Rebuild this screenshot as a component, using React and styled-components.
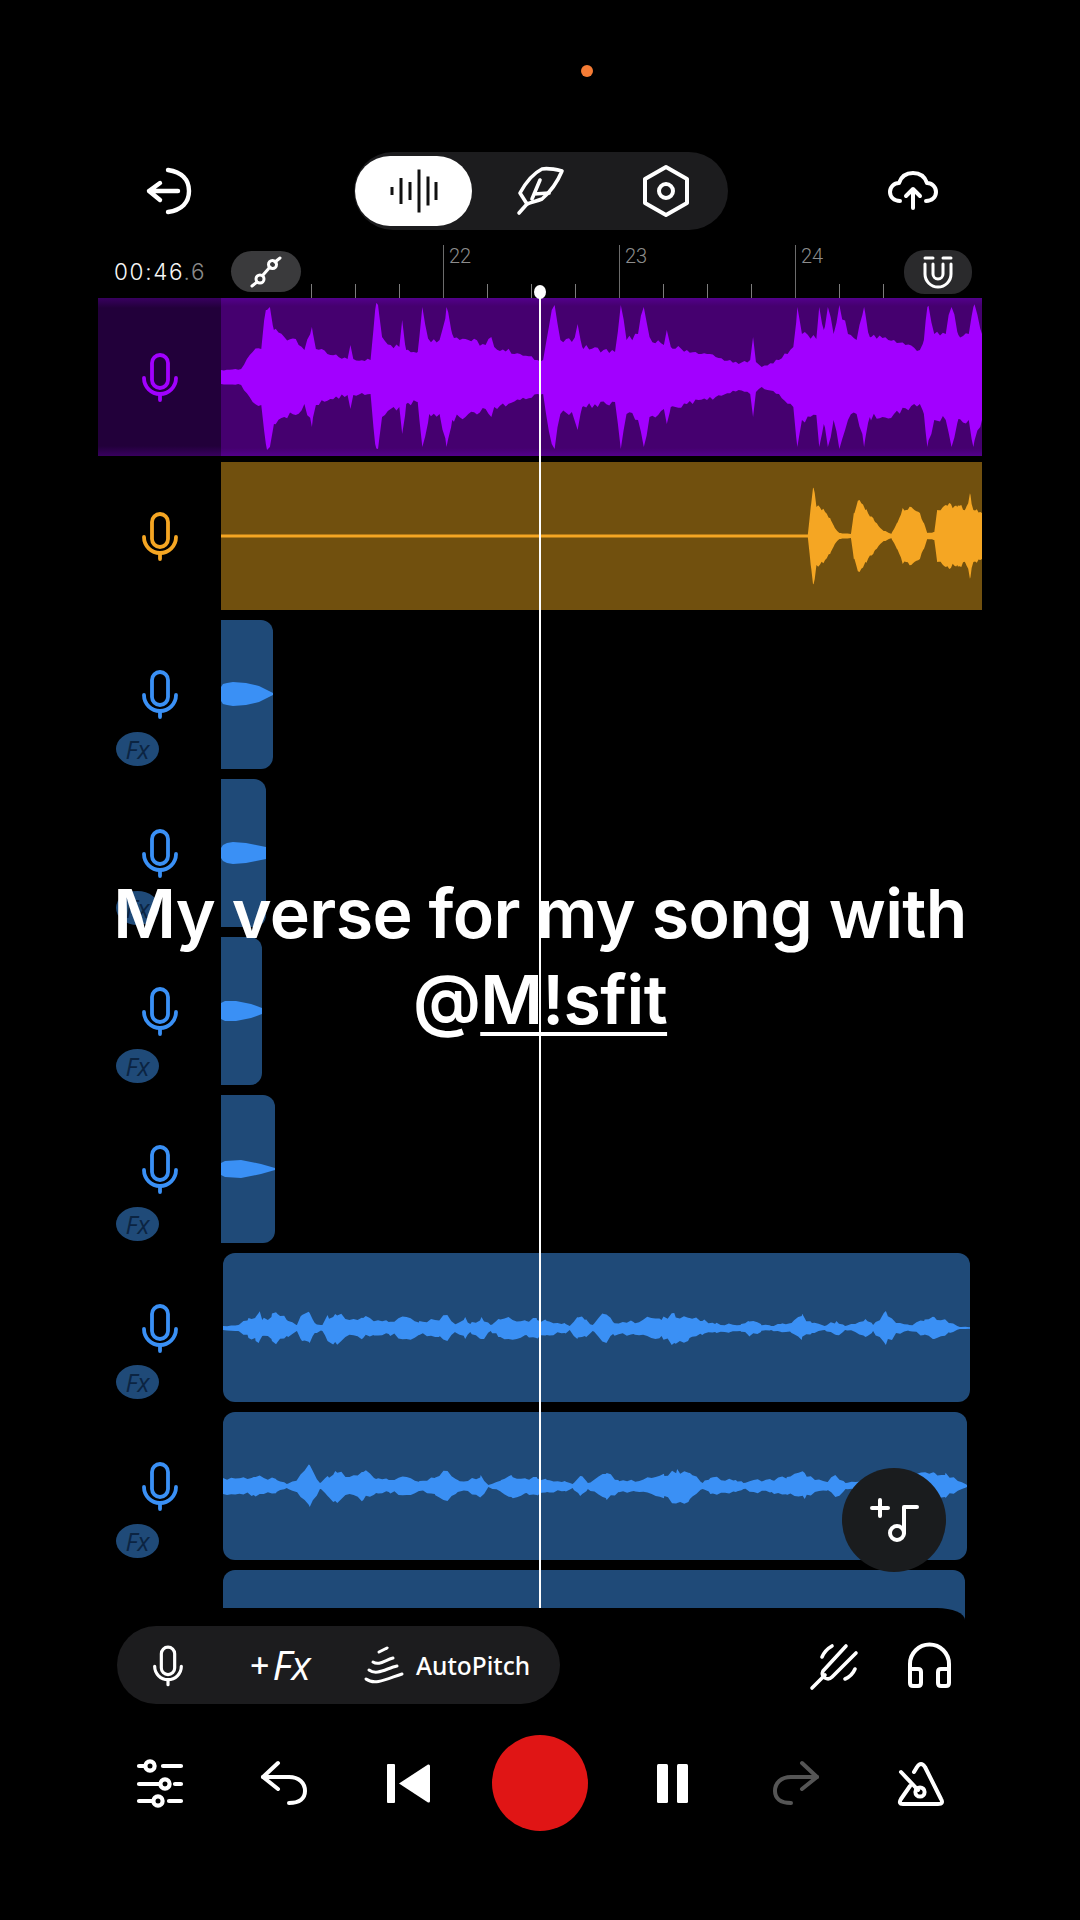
import React from "react";
import styled, { createGlobalStyle } from "styled-components";

const GlobalStyle = createGlobalStyle`
  html, body {
    margin: 0;
    background: #000;
  }
`;

const PURPLE = "#a200ff";
const AMBER = "#f5a623";
const BLUE = "#3a90f5";

// waveform envelopes as [x, amplitude] pairs, x is in free units and gets stretched to the clip
const vocalWave = [[230,7],[265,8],[285,25],[300,28],[308,67],[315,70],[322,47],[340,40],[360,38],[375,27],[388,50],[395,28],[420,22],[450,18],[455,32],[460,18],[490,17],[498,67],[503,72],[510,40],[525,32],[540,30],[545,57],[552,27],[572,25],[580,70],[592,37],[610,37],[622,70],[632,43],[660,37],[690,32],[700,40],[705,30],[750,23],[780,17],[790,17],[805,67],[810,72],[820,37],[840,35],[850,53],[858,30],[915,25],[925,72],[935,37],[955,43],[965,70],[975,40],[1000,32],[1005,47],[1012,30],[1040,27],[1060,23],[1075,23],[1090,20],[1130,13],[1150,17],[1155,40],[1160,15],[1170,10],[1200,17],[1225,30],[1232,70],[1240,43],[1265,38],[1270,70],[1278,47],[1285,70],[1295,43],[1305,72],[1320,43],[1335,37],[1348,70],[1358,40],[1400,37],[1445,27],[1452,37],[1458,70],[1470,43],[1490,43],[1500,70],[1512,42],[1530,43],[1538,70],[1553,43]];
const amberLead = [[229,1.5],[1250,1.5]];
const amberWave = [[1250,1.5],[1255,29],[1260,48],[1265,29],[1280,24],[1290,16],[1297,8],[1305,3],[1325,2],[1330,23],[1340,36],[1350,26],[1365,16],[1380,6],[1395,2],[1405,13],[1415,28],[1430,29],[1445,23],[1452,13],[1458,3],[1470,4],[1475,26],[1490,31],[1510,29],[1525,28],[1533,41],[1538,26],[1553,23]];
const takeWaveA = [[45,2],[75,3],[95,10],[108,10],[115,15],[122,8],[140,11],[152,14],[170,8],[190,3],[200,13],[215,15],[225,5],[240,3],[250,13],[265,14],[285,9],[320,10],[340,7],[370,6],[405,11],[430,7],[470,8],[485,13],[500,4],[520,11],[530,4],[552,11],[570,3],[585,9],[605,11],[640,7],[660,10],[680,7],[715,5],[725,2],[740,11],[755,8],[770,3],[792,14],[810,6],[850,6],[885,10],[905,8],[930,15],[960,10],[985,7],[1010,4],[1040,4],[1060,3],[1075,7],[1100,4],[1120,2],[1140,4],[1160,5],[1180,12],[1200,5],[1225,2],[1248,7],[1265,2],[1285,4],[1305,9],[1320,3],[1345,17],[1365,5],[1390,3],[1420,7],[1440,11],[1470,5],[1490,1],[1510,1]];
const takeWaveB = [[45,8],[80,8],[105,9],[125,8],[150,6],[170,2],[190,6],[215,21],[235,3],[250,10],[265,15],[285,9],[320,14],[345,7],[370,6],[405,9],[430,5],[460,8],[485,15],[505,6],[525,5],[550,11],[565,1],[590,6],[610,11],[640,7],[660,9],[680,6],[715,5],[730,2],[745,10],[760,3],[795,12],[820,6],[850,5],[885,8],[910,10],[935,17],[960,13],[985,3],[1000,8],[1050,6],[1065,3],[1085,6],[1120,6],[1150,9],[1185,13],[1205,6],[1230,4],[1245,11],[1265,3],[1285,4],[1440,13],[1460,11],[1503,1]];

const shortTakes = [
  { width: 52, wave: [[0,7],[2,10],[6,11],[12,12],[25,11],[38,8],[46,4],[52,1]] },
  { width: 45, wave: [[0,5],[2,8],[6,10],[12,11],[25,10],[35,8],[45,6]] },
  { width: 41, wave: [[0,8],[4,10],[15,10],[30,7],[41,3]] },
  { width: 54, wave: [[0,6],[4,8],[20,9],[40,5],[54,1]] },
];

const ticks = Array.from({ length: 14 }, (_, i) => {
  const major = i % 4 === 3;
  return { major, label: major ? 22 + (i - 3) / 4 : null };
});

// repeatable noise so the envelopes look like sampled audio
const noise = (n) => {
  const v = Math.sin(n * 12.9898) * 43758.5453;
  return v - Math.floor(v);
};

const ampAt = (points, x) => {
  const i = points.findIndex((p) => p[0] >= x);
  if (i <= 0) return points[Math.max(i, 0)][1];
  const [x0, a0] = points[i - 1];
  const [x1, a1] = points[i];
  return a0 + ((x - x0) / (x1 - x0)) * (a1 - a0);
};

const roughen = (points, step, depth, seed) => {
  const xs = new Set(points.map((p) => p[0]));
  const start = points[0][0];
  const end = points[points.length - 1][0];
  const samples = points.map((p) => [p[0], p[1]]);
  let n = seed;
  for (let x = start + step; x < end; x += step) {
    n += 1;
    if (!xs.has(x)) samples.push([x, ampAt(points, x) * (1 - depth + noise(n) * depth * 2)]);
  }
  return samples.sort((a, b) => a[0] - b[0]);
};

const Page = styled.div`
  position: relative;
  width: 1080px;
  height: 1920px;
  overflow: hidden;
  background: #000;
  color: #fff;
  font-family: "Noto Sans", sans-serif;
`;

const StatusRow = styled.div`
  height: 152px;
  box-sizing: border-box;
  padding: 65px 0 0 581px;
`;

const StatusDot = styled.div`
  width: 12px;
  height: 12px;
  border-radius: 50%;
  background: #f57c35;
`;

const Header = styled.div`
  display: flex;
  align-items: center;
  height: 78px;
  padding-left: 147px;
`;

const ModePill = styled.div`
  display: flex;
  align-items: center;
  width: 374px;
  height: 78px;
  margin: 0 160px 0 163px;
  padding-left: 1px;
  box-sizing: border-box;
  border-radius: 39px;
  background: #1c1c1e;
`;

const ModeButton = styled.div`
  display: flex;
  align-items: center;
  justify-content: center;
  flex: none;
  width: ${(p) => (p.$active ? "117px" : "126px")};
  height: 70px;
  margin-right: ${(p) => (p.$active ? "5px" : "0")};
  border-radius: 35px;
  background: ${(p) => (p.$active ? "#fff" : "transparent")};
`;

const TimelineRow = styled.div`
  display: flex;
  align-items: center;
  height: 68px;
  box-sizing: border-box;
  padding: 15px 0 0 114px;
`;

const Clock = styled.div`
  width: 117px;
  flex: none;
  font-family: Inter, sans-serif;
  font-weight: 300;
  font-size: 22.5px;
  letter-spacing: 1.7px;
  color: #f7f7f7;

  span {
    color: #8a8a8a;
  }
`;

const RoundTool = styled.div`
  display: flex;
  align-items: center;
  justify-content: center;
  flex: none;
  width: ${(p) => p.$w}px;
  height: ${(p) => p.$h}px;
  border-radius: 21px;
  background: ${(p) => p.$bg};
`;

const Ruler = styled.div`
  display: flex;
  align-items: flex-end;
  flex: none;
  width: 593px;
  height: 100%;
  margin-left: 10px;
`;

const Tick = styled.div`
  position: relative;
  flex: none;
  width: 44px;
  height: ${(p) => (p.$major ? "53px" : "14px")};
  box-sizing: border-box;
  border-left: 1px solid ${(p) => (p.$major ? "#6c6c6c" : "#7d7d7d")};
`;

const TickLabel = styled.span`
  position: absolute;
  left: 5px;
  top: 0;
  font-family: Roboto, sans-serif;
  font-weight: 300;
  font-size: 20px;
  line-height: 22px;
  color: #8c8c8c;
`;

const Tracks = styled.div`
  position: relative;
  display: flex;
  flex-direction: column;
  height: 1322px;
  overflow: hidden;
`;

const TrackRow = styled.div`
  display: flex;
  flex: none;
  box-sizing: border-box;
  height: ${(p) => p.$h || 148.3}px;
  margin: 0 98px ${(p) => p.$gap ?? 10}px;
`;

const TrackSide = styled.div`
  position: relative;
  display: flex;
  align-items: center;
  justify-content: center;
  flex: none;
  width: 123px;
  background: ${(p) => p.$bg || "transparent"};
`;

const FxBadge = styled.div`
  position: absolute;
  left: 18px;
  top: 112px;
  display: flex;
  align-items: center;
  justify-content: center;
  width: 43px;
  height: 34px;
  border-radius: 50%;
  background: #1f4a78;
  font-family: "Open Sans", sans-serif;
  font-style: italic;
  font-weight: 500;
  font-size: 25px;
  color: #0b2442;
`;

const Clip = styled.div`
  display: flex;
  align-items: center;
  flex: none;
  width: ${(p) => p.$w}px;
  margin-left: ${(p) => p.$inset || 0}px;
  border-radius: ${(p) => p.$radius || "0"};
  background: ${(p) => p.$bg};
`;

const WaveSvg = styled.svg`
  display: block;
  width: 100%;
  fill: ${(p) => p.$fill};
`;

const ToolbarCorner = styled.div`
  position: absolute;
  left: 0;
  top: 1310px;
  width: 965px;
  height: 12px;
  background: #000;
  border-top-right-radius: 28px 12px;
`;

const Playhead = styled.div`
  position: absolute;
  left: 539px;
  top: 292px;
  width: 2px;
  height: 1316px;
  background: #fff;

  &::before {
    content: "";
    position: absolute;
    left: -5px;
    top: -7px;
    width: 12px;
    height: 14px;
    border-radius: 50%;
    background: #fff;
  }
`;

const Caption = styled.div`
  position: absolute;
  left: 0;
  right: 0;
  top: 870px;
  font-family: Inter, sans-serif;
  font-weight: 600;
  font-size: 68px;
  line-height: 86px;
  letter-spacing: -0.62px;
  text-align: center;
  color: #fff;

  u {
    text-decoration-thickness: 4px;
    text-underline-offset: 8px;
  }
`;

const AddButton = styled.div`
  position: absolute;
  left: 842px;
  top: 1468px;
  display: flex;
  align-items: center;
  justify-content: center;
  width: 104px;
  height: 104px;
  border-radius: 50%;
  background: #1a1c1e;
`;

const ToolbarRow = styled.div`
  display: flex;
  align-items: center;
  margin-top: 6px;
  height: 78px;
  padding-left: 117px;
`;

const ToolsPill = styled.div`
  display: flex;
  align-items: center;
  width: 443px;
  height: 78px;
  box-sizing: border-box;
  padding-left: 36px;
  border-radius: 39px;
  background: #1c1c1e;
`;

const AddFx = styled.div`
  display: flex;
  align-items: center;
  gap: 3px;
  width: 62px;
  margin: 0 53px 0 67px;
  flex: none;
  white-space: nowrap;
`;

const Plus = styled.span`
  font-weight: 500;
  font-size: 34px;
  line-height: 1;
`;

const FxLabel = styled.span`
  font-family: "Open Sans", sans-serif;
  font-style: italic;
  font-weight: 500;
  font-size: 40px;
  line-height: 1;
`;

const PitchLabel = styled.span`
  margin-left: 13px;
  font-weight: 500;
  font-size: 24.5px;
`;

const ToolbarRight = styled.div`
  display: flex;
  align-items: center;
  gap: 51px;
  margin-left: 250px;
`;

const Transport = styled.div`
  display: flex;
  align-items: center;
  height: 96px;
  margin-top: 31px;
  padding-left: 98px;
`;

const TransportCell = styled.div`
  display: flex;
  align-items: center;
  justify-content: center;
  flex: none;
  width: ${(p) => (p.$wide ? "140px" : "124px")};
`;

const RecordButton = styled.div`
  width: 96px;
  height: 96px;
  border-radius: 50%;
  background: #e01515;
`;

const Stroke = styled.svg`
  display: block;
  flex: none;
  fill: none;
  stroke: ${(p) => p.$color || "#fff"};
  stroke-width: ${(p) => p.$sw || 4};
  stroke-linecap: round;
  stroke-linejoin: round;
  overflow: visible;
`;

const Wave = ({ points, fill, step, depth = 0 }) => {
  const upper = step ? roughen(points, step, depth, 1) : points;
  const lower = step ? roughen(points, step, depth, 400) : points;
  const x0 = points[0][0];
  const x1 = points[points.length - 1][0];
  const peak = Math.ceil(Math.max(...upper.concat(lower).map((p) => p[1])));
  const top = upper.map(([x, a]) => `${x},${peak - a}`);
  const bottom = [...lower].reverse().map(([x, a]) => `${x},${peak + a}`);
  return (
    <WaveSvg
      $fill={fill}
      viewBox={`${x0} 0 ${x1 - x0} ${peak * 2}`}
      preserveAspectRatio="none"
      style={{ height: peak * 2 }}
    >
      <polygon points={[...top, ...bottom].join(" ")} />
    </WaveSvg>
  );
};

const MicIcon = ({ color = "#fff", w = 36, h = 48, sw = 3.8 }) => (
  <Stroke $color={color} $sw={sw} width={w} height={h} viewBox="0 0 36 48">
    <rect x="10" y="2" width="16" height="33" rx="8" />
    <path d="M2 25a16 16 0 0 0 32 0" />
    <path d="M18 41v6" />
  </Stroke>
);

const BackIcon = () => (
  <Stroke $sw={4.4} width="44" height="44" viewBox="0 0 44 44">
    <path d="M21 1C35 3 42 11 42 22C42 33 35 41 21 43" />
    <path d="M31 22H2M13 14L2 22L13 31" />
  </Stroke>
);

const BarsIcon = () => (
  <svg width="48" height="44" viewBox="0 0 48 44">
    {[[2, 8], [11, 26], [20, 18], [29, 43], [38, 29], [46, 18]].map(([x, h]) => (
      <rect key={x} x={x - 1.5} y={22 - h / 2} width="3" height={h} fill="#111" />
    ))}
  </svg>
);

const FeatherIcon = () => (
  <Stroke $sw={3.6} width="47" height="48" viewBox="18 11 47 48">
    <path d="M63 15C55 13 48 12 43 13C35 17 27 26 21 37L28 48C33 46 38 45 43 43C50 37 58 27 63 15Z" />
    <path d="M28 48L20 57" />
    <path d="M41 24L33 43M35 38L50 37" />
  </Stroke>
);

const HexIcon = () => (
  <Stroke width="46" height="52" viewBox="0 0 46 52">
    <path d="M23 2L44 14V38L23 50L2 38V14Z" />
    <circle cx="23" cy="26" r="7" />
  </Stroke>
);

const CloudIcon = () => (
  <Stroke width="50" height="38" viewBox="0 1 50 38">
    <path d="M12 30C6 30 2 26 2 21C2 16 6 12 11 12C13 6 18 2 25 2C32 2 37 6 39 12C44 12 48 16 48 21C48 26 44 30 38 30" />
    <path d="M25 37V18M18 25L25 18L32 25" />
  </Stroke>
);

const NodesIcon = () => (
  <Stroke $sw={3} width="32" height="32" viewBox="0 0 32 32">
    <path d="M2 30L7 26M13 19L20 11M25 6L30 2" />
    <circle cx="10" cy="23" r="4" />
    <circle cx="22.5" cy="8.5" r="4" />
  </Stroke>
);

const MagnetIcon = () => (
  <Stroke $sw={3} width="30" height="32" viewBox="0 0 30 32">
    <path d="M2 2H10M20 2H28" />
    <path d="M2 8V18A13 13 0 0 0 28 18V8" />
    <path d="M10 8V18A5 5 0 0 0 20 18V8" />
  </Stroke>
);

const AddNoteIcon = () => (
  <Stroke width="46" height="43" viewBox="0 0 46 43">
    <path d="M1 9H17M9 1V17" />
    <path d="M46 8H33V34" />
    <circle cx="26" cy="34" r="7" />
  </Stroke>
);

const PitchIcon = () => (
  <Stroke $sw={3} width="38" height="38" viewBox="0 0 38 38">
    <path d="M14 6L22 2" />
    <path d="M8 16C14 20 20 14 28 12" />
    <path d="M4 24C12 30 22 22 32 20" />
    <path d="M1 33C10 40 24 32 37 28" />
  </Stroke>
);

const ForkIcon = () => (
  <Stroke $sw={3.6} width="46" height="46" viewBox="0 0 46 46">
    <path d="M2 46L15 33" />
    <path d="M36 4L13 29Q11 33 15 36Q19 38 22 35L46 11" />
    <path d="M12 15Q15 8 22 4" />
    <path d="M35 37Q42 34 45 27" />
  </Stroke>
);

const HeadphonesIcon = () => (
  <Stroke width="45" height="46" viewBox="0 0 45 46">
    <path d="M3 30V22A19.5 19.5 0 0 1 42 22V30" />
    <path d="M3 27H11Q14 27 14 30V41Q14 44 11 44H6Q3 44 3 41Z" />
    <path d="M42 27H34Q31 27 31 30V41Q31 44 34 44H39Q42 44 42 41Z" />
  </Stroke>
);

const SlidersIcon = () => (
  <Stroke $sw={4.2} width="44" height="47" viewBox="0 0 44 47">
    <path d="M1 6H7M25 6H43" />
    <circle cx="12" cy="6" r="4.6" />
    <path d="M1 24H21M37 24H43" />
    <circle cx="27" cy="24" r="4.6" />
    <path d="M1 41H14M31 41H43" />
    <circle cx="20" cy="41" r="4.6" />
  </Stroke>
);

const UndoIcon = ({ color, flip }) => (
  <Stroke
    $color={color}
    width="44"
    height="43"
    viewBox="0 0 44 43"
    style={flip ? { transform: "scaleX(-1)" } : undefined}
  >
    <path d="M16 1L1 15L16 27" />
    <path d="M1 15H27C37 15 43 21 43 29C43 36 38 41 27 41" />
  </Stroke>
);

const PrevIcon = () => (
  <svg width="43" height="39" viewBox="0 0 43 39" fill="#fff">
    <rect x="0" y="0" width="8" height="39" rx="1" />
    <path d="M12 19.5L41 0.5Q43 0 43 2V37Q43 39 41 38.5Z" />
  </svg>
);

const PauseIcon = () => (
  <svg width="31" height="39" viewBox="0 0 31 39" fill="#fff">
    <rect x="0" y="0" width="11" height="39" rx="1.5" />
    <rect x="20" y="0" width="11" height="39" rx="1.5" />
  </svg>
);

const MetronomeIcon = () => (
  <Stroke width="45" height="43" viewBox="0 0 45 43">
    <path d="M12 24L3 37Q0 42 5 42H40Q46 42 43 37L27 5Q23 -1 19 5L16 10" />
    <path d="M3 10L20 28" />
    <circle cx="22" cy="30" r="4.6" />
  </Stroke>
);

const TakeRow = ({ children }) => (
  <TrackRow>
    <TrackSide>
      <MicIcon color={BLUE} />
      <FxBadge>Fx</FxBadge>
    </TrackSide>
    {children}
  </TrackRow>
);

// the selected track glows a little along its top and bottom edge
const selectedSide = "linear-gradient(#38005f, #22003a 10px, #22003a calc(100% - 10px), #38005f)";
const selectedClip = "linear-gradient(#53008c, #45006f 8px, #45006f calc(100% - 8px), #53008c)";

export default function App() {
  const amberPoints = [...amberLead, ...roughen(amberWave, 3, 0.1, 7).slice(1)];

  return (
    <Page>
      <GlobalStyle />
      <StatusRow>
        <StatusDot />
      </StatusRow>

      <Header>
        <BackIcon />
        <ModePill>
          <ModeButton $active>
            <BarsIcon />
          </ModeButton>
          <ModeButton>
            <FeatherIcon />
          </ModeButton>
          <ModeButton>
            <HexIcon />
          </ModeButton>
        </ModePill>
        <CloudIcon />
      </Header>

      <TimelineRow>
        <Clock>
          00:46<span>.6</span>
        </Clock>
        <RoundTool $w={70} $h={41} $bg="#3a3a3c">
          <NodesIcon />
        </RoundTool>
        <Ruler>
          {ticks.map((t, i) => (
            <Tick key={i} $major={t.major}>
              {t.label && <TickLabel>{t.label}</TickLabel>}
            </Tick>
          ))}
        </Ruler>
        <RoundTool $w={68} $h={44} $bg="#2a2a2c">
          <MagnetIcon />
        </RoundTool>
      </TimelineRow>

      <Tracks>
        <TrackRow $h={158} $gap={6}>
          <TrackSide $bg={selectedSide}>
            <MicIcon color={PURPLE} />
          </TrackSide>
          <Clip $w={761} $bg={selectedClip}>
            <Wave points={vocalWave} fill={PURPLE} step={5} depth={0.1} />
          </Clip>
        </TrackRow>

        <TrackRow>
          <TrackSide>
            <MicIcon color={AMBER} />
          </TrackSide>
          <Clip $w={761} $bg="#71500e">
            <Wave points={amberPoints} fill={AMBER} />
          </Clip>
        </TrackRow>

        {shortTakes.map((take) => (
          <TakeRow key={take.width}>
            <Clip $w={take.width} $bg="#1f4a78" $radius="0 12px 12px 0">
              <Wave points={take.wave} fill={BLUE} />
            </Clip>
          </TakeRow>
        ))}

        <TakeRow>
          <Clip $w={747} $inset={2} $bg="#1f4a78" $radius="12px">
            <Wave points={takeWaveA} fill={BLUE} step={8} depth={0.3} />
          </Clip>
        </TakeRow>
        <TakeRow>
          <Clip $w={744} $inset={2} $bg="#1f4a78" $radius="12px">
            <Wave points={takeWaveB} fill={BLUE} step={8} depth={0.25} />
          </Clip>
        </TakeRow>
        {/* last track only peeks out above the toolbar */}
        <TrackRow>
          <TrackSide />
          <Clip $w={742} $inset={2} $bg="#1f4a78" $radius="12px" />
        </TrackRow>

        <ToolbarCorner />
      </Tracks>

      <ToolbarRow>
        <ToolsPill>
          <MicIcon w={30} h={41} sw={3.8} />
          <AddFx>
            <Plus>+</Plus>
            <FxLabel>Fx</FxLabel>
          </AddFx>
          <PitchIcon />
          <PitchLabel>AutoPitch</PitchLabel>
        </ToolsPill>
        <ToolbarRight>
          <ForkIcon />
          <HeadphonesIcon />
        </ToolbarRight>
      </ToolbarRow>

      <Transport>
        <TransportCell>
          <SlidersIcon />
        </TransportCell>
        <TransportCell>
          <UndoIcon />
        </TransportCell>
        <TransportCell>
          <PrevIcon />
        </TransportCell>
        <TransportCell $wide>
          <RecordButton />
        </TransportCell>
        <TransportCell>
          <PauseIcon />
        </TransportCell>
        <TransportCell>
          <UndoIcon color="#555" flip />
        </TransportCell>
        <TransportCell>
          <MetronomeIcon />
        </TransportCell>
      </Transport>

      <Playhead />
      <AddButton>
        <AddNoteIcon />
      </AddButton>
      <Caption>
        My verse for my song with
        <br />
        @<u>M!sfit</u>
      </Caption>
    </Page>
  );
}
